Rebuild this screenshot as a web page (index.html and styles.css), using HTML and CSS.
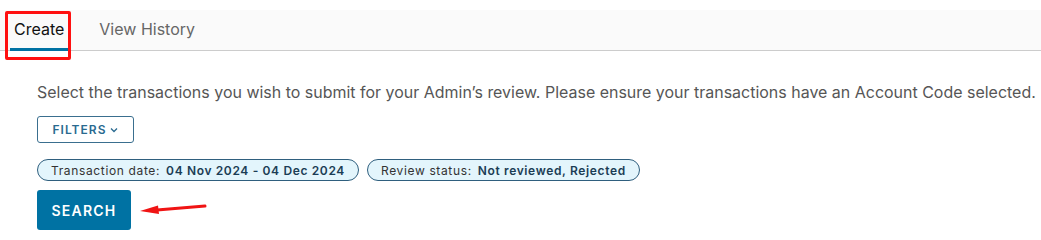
FILE: index.html
```html
<!DOCTYPE html>
<html lang="en">
<head>
    <meta charset="UTF-8">
    <title>Submit transactions</title>
    <link rel="stylesheet" href="styles.css">
</head>
<body>

    <!-- tabs -->
    <div class="tabs">
        <a class="tab active" href="#">Create</a>
        <a class="tab" href="#">View History</a>
        <span class="mark-box"></span>
    </div>

    <!-- main -->
    <div class="content">
        <p class="intro">Select the transactions you wish to submit for your Admin’s review. Please ensure your transactions have an Account Code selected.</p>

        <button class="btn-filters">FILTERS
            <svg width="8" height="6" viewBox="0 0 8 6"><path d="M1 1.5 L4 4.5 L7 1.5" fill="none" stroke="currentColor" stroke-width="1.3"/></svg>
        </button>

        <div class="chips">
            <span class="chip">Transaction date: <b>04 Nov 2024 - 04 Dec 2024</b></span>
            <span class="chip">Review status: <b>Not reviewed, Rejected</b></span>
        </div>

        <div class="search-row">
            <button class="btn-search">SEARCH</button>
            <svg class="mark-arrow" width="70" height="14" viewBox="0 0 70 14">
                <path d="M66 3 L18 7" stroke="#f01414" stroke-width="3" stroke-linecap="round" fill="none"/>
                <path d="M1 8 L19 2.5 L20 11 Z" fill="#f01414"/>
            </svg>
        </div>
    </div>

</body>
</html>
```

FILE: styles.css
```css
/* base */
body {
    font-family: Inter, 'Liberation Sans', sans-serif;
    margin: 0;
    padding: 0;
    background-color: #ffffff;
    color: #565656;
}

/* tabs */
.tabs {
    position: relative;
    margin-top: 10px;
    height: 40px;
    background-color: #fafafa;
    border-bottom: 1px solid #cccccc;
    display: flex;
    align-items: flex-end;
    padding-left: 10px;
    gap: 27px;
}

.tab {
    text-decoration: none;
    color: #666666;
    font-size: 16px;
    padding: 0 4px 9px;
    border-bottom: 3px solid transparent;
    margin-bottom: -1px;
}

.tab.active {
    color: #111111;
    border-bottom-color: #0072a3;
}

/* red annotation box */
.mark-box {
    position: absolute;
    left: 5px;
    top: 1px;
    width: 60px;
    height: 43px;
    border: 3px solid #ff1010;
    border-radius: 2px;
}

/* content */
.content {
    padding: 0 37px;
}

.intro {
    font-size: 15.97px;
    margin: 32px 0 14px;
    white-space: nowrap;
}

.btn-filters {
    display: flex;
    align-items: center;
    gap: 4px;
    height: 27px;
    width: 97px;
    justify-content: center;
    background: #ffffff;
    border: 1px solid #3a6f8f;
    border-radius: 3px;
    color: #2a6a90;
    font-family: inherit;
    font-size: 12px;
    font-weight: 600;
    letter-spacing: 1px;
    padding: 0;
}

.chips {
    display: flex;
    gap: 8px;
    margin-top: 16px;
}

.chip {
    height: 20px;
    line-height: 21px;
    padding: 0 13px;
    border: 1px solid #2f5f7e;
    border-radius: 11px;
    background-color: #e3f5fc;
    color: #333333;
    font-size: 12px;
    letter-spacing: 0.64px;
}

.chip b {
    color: #1b3d55;
    font-weight: 600;
    margin-left: 2px;
}

.search-row {
    display: flex;
    align-items: center;
    margin-top: 9px;
}

.btn-search {
    width: 94px;
    height: 40px;
    background-color: #0072a3;
    border: none;
    border-radius: 3px;
    color: #ffffff;
    font-family: inherit;
    font-size: 14px;
    font-weight: 600;
    letter-spacing: 1.2px;
}

.mark-arrow {
    margin-left: 8px;
    margin-top: 0;
}
```
